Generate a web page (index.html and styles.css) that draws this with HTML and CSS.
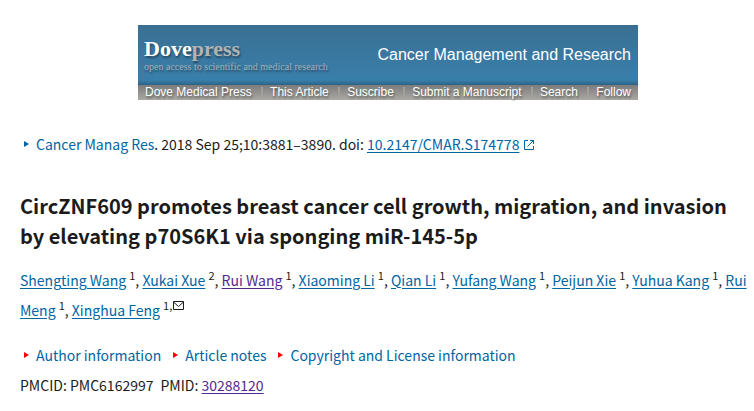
FILE: index.html
```html
<!DOCTYPE html>
<html lang="en">
<head>
<meta charset="utf-8">
<meta name="viewport" content="width=device-width, initial-scale=1">
<title>CircZNF609 promotes breast cancer cell growth</title>
<link rel="stylesheet" href="styles.css">
</head>
<body>

<header class="masthead">
  <div class="banner">
    <div class="banner-top">
      <div class="brand">
        <div class="logo">Dove<span>press</span></div>
        <div class="tagline">open access to scientific and medical research</div>
      </div>
      <div class="journal">Cancer Management and Research</div>
    </div>
    <nav class="banner-nav">
      <a href="#">Dove Medical Press</a>
      <a href="#">This Article</a>
      <a href="#">Suscribe</a>
      <a href="#">Submit a Manuscript</a>
      <a href="#">Search</a>
      <a href="#">Follow</a>
    </nav>
  </div>
</header>

<main class="article">
  <div class="citation">
    <button class="toggle blue" type="button">Cancer Manag Res</button>. 2018 Sep 25;10:3881–3890. doi: <a href="#">10.2147/CMAR.S174778</a><svg class="external" viewBox="0 0 12 12" width="12" height="12" aria-hidden="true"><path d="M5 1.5H1.5v9h9V7M7 1.5h3.5V5M10.5 1.5L4.5 7.5"/></svg>
  </div>

  <h1>CircZNF609 promotes breast cancer cell growth, migration, and invasion by elevating p70S6K1 via sponging miR-145-5p</h1>

  <div class="authors">
    <a href="#">Shengting Wang</a> <sup>1</sup>, <a href="#">Xukai Xue</a> <sup>2</sup>, <a href="#" class="seen">Rui Wang</a> <sup>1</sup>, <a href="#">Xiaoming Li</a> <sup>1</sup>, <a href="#">Qian Li</a> <sup>1</sup>, <a href="#">Yufang Wang</a> <sup>1</sup>, <a href="#">Peijun Xie</a> <sup>1</sup>, <a href="#">Yuhua Kang</a> <sup>1</sup>, <a href="#">Rui Meng</a> <sup>1</sup>, <a href="#">Xinghua Feng</a> <sup>1,<svg class="mail" viewBox="0 0 11 9" width="11" height="9" aria-hidden="true"><path d="M.5 .5h10v8H.5zM.5 1l5 4.5 5-4.5"/></svg></sup>
  </div>

  <div class="notes">
    <button class="toggle" type="button">Author information</button>
    <button class="toggle" type="button">Article notes</button>
    <button class="toggle" type="button">Copyright and License information</button>
  </div>

  <div class="ids">
    <span>PMCID: PMC6162997</span>
    <span>PMID: <a href="#" class="seen">30288120</a></span>
  </div>
</main>

</body>
</html>
```

FILE: styles.css
```css
body {
  margin: 0;
  background: #fff;
  color: #1b1b1b;
  font-family: "Noto Sans CJK SC", sans-serif;
  font-size: 14px;
  line-height: 30px;
}

a {
  color: #0065a3;
  text-underline-offset: 2px;
}
a.seen {
  color: #54278f;
}

/* journal banner */
.masthead {
  padding: 25px 0 0 22px;
}
.banner {
  max-width: 500px;
  margin: 0 auto;
  font-family: "Liberation Sans", Arial, sans-serif;
  color: #fff;
}
.banner-top {
  display: flex;
  justify-content: space-between;
  align-items: center;
  height: 60px;
  padding: 0 7px 0 6px;
  box-sizing: border-box;
  background: linear-gradient(#3a6f92, #397fab 92%, #2c6386);
}
.brand {
  font-family: "Liberation Serif", "Times New Roman", serif;
  text-shadow: 1px 2px 2px rgba(0, 0, 0, 0.4);
}
.logo {
  font-size: 22px;
  line-height: 24px;
  font-weight: bold;
}
.logo span {
  color: #b3b3b3;
}
.tagline {
  font-size: 10px;
  line-height: 12px;
  color: #a5b0b7;
}
.journal {
  font-size: 16px;
  line-height: 20px;
}
.banner-nav {
  display: flex;
  justify-content: space-between;
  padding: 0 7px;
  background: linear-gradient(#7c7c7c, #aaa8a3);
}
.banner-nav a {
  color: #fff;
  font-size: 12px;
  line-height: 15px;
  text-decoration: none;
  text-shadow: 1px 2px 2px rgba(0, 0, 0, 0.4);
}
.banner-nav a + a::before {
  content: "";
  display: inline-block;
  width: 2px;
  height: 10px;
  margin-right: 7px;
  vertical-align: -1px;
  background: #a3a09c;
}

/* article head */
.article {
  padding: 29px 4px 10px 20px;
}

.toggle {
  margin: 0;
  padding: 0;
  border: 0;
  background: none;
  color: #0065a3;
  font: inherit;
  cursor: pointer;
}
.toggle::before {
  content: "";
  display: inline-block;
  margin: 0 7px 0 4px;
  border: solid transparent;
  border-width: 3px 0 3px 5px;
  border-left-color: #f00;
  vertical-align: 3px;
}
.toggle.blue::before {
  border-left-color: #0065a3;
}

.external,
.mail {
  fill: none;
  stroke: #0065a3;
}
.external {
  margin-left: 4px;
  vertical-align: -1px;
}
.mail {
  margin-left: 1px;
  stroke: #1b1b1b;
}

h1 {
  margin: 32px 0 14px;
  font-size: 20px;
  line-height: 30px;
  font-weight: bold;
}

sup {
  font-size: 11px;
  line-height: 12px;
  vertical-align: 6px;
}

.notes {
  display: flex;
  flex-wrap: wrap;
  column-gap: 8px;
  margin-top: 15px;
}

.ids {
  display: flex;
  flex-wrap: wrap;
  column-gap: 7px;
}
```
